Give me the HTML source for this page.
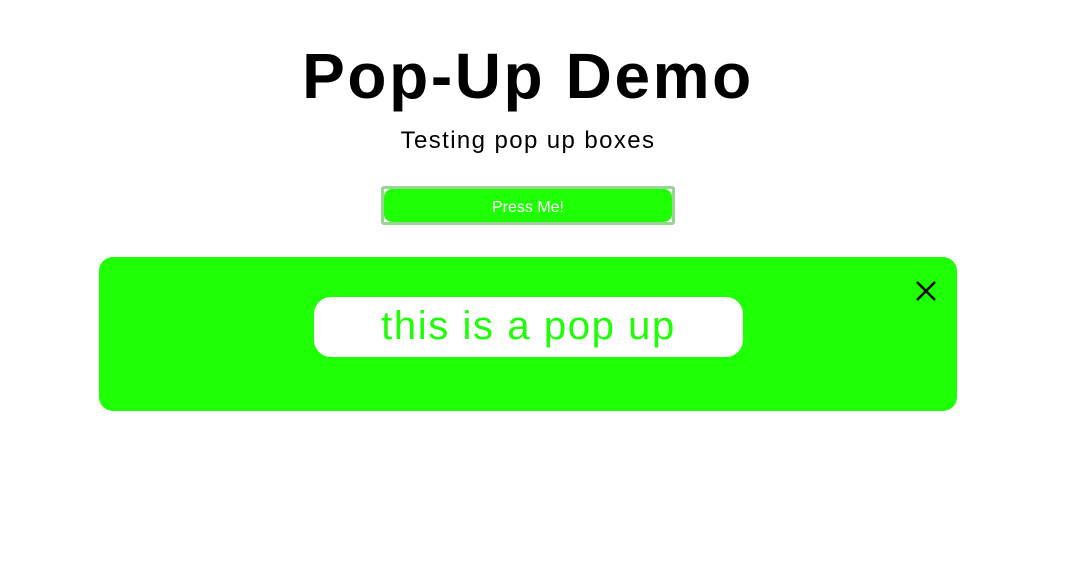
<!DOCTYPE html>
<html><head><style>
body{margin:0;width:1084px;height:571px;background:#fff;font-family:"Liberation Sans",sans-serif;position:relative;overflow:hidden}
h1{position:absolute;left:0;width:1056px;top:38px;margin:0;text-align:center;font-size:64px;font-weight:bold;letter-spacing:2.6px;line-height:76px;color:#000}
.sub{position:absolute;left:0;width:1056px;top:126px;text-align:center;font-size:24px;color:#000;line-height:30px;letter-spacing:1.4px}
.btnwrap{position:absolute;left:381px;top:186px;width:288px;height:33px;border:3px solid #9ad394;border-radius:3px;}
.btn{position:absolute;left:0;top:0;width:288px;height:33px;background:#1eff06;border-radius:8px;color:#fff;text-align:center;font-size:16px;line-height:37px}
.pop{position:absolute;left:99px;top:257px;width:858px;height:154px;background:#1eff06;border-radius:14px}
.inner{position:absolute;left:215px;top:40px;width:429px;height:60px;background:#fff;border-radius:17px;color:#1eff06;text-align:center;font-size:40px;line-height:58px;font-weight:100;letter-spacing:1.6px}
.x{position:absolute;left:817px;top:24px}
</style></head><body>
<h1>Pop-Up Demo</h1>
<div class="sub">Testing pop up boxes</div>
<div class="btnwrap"><div class="btn">Press Me!</div></div>
<div class="pop">
<div class="inner">this is a pop up</div>
<svg class="x" width="20" height="20" viewBox="0 0 20 20"><path d="M1 1L19 19M19 1L1 19" stroke="#000" stroke-width="2.4"/></svg>
</div>
</body></html>
